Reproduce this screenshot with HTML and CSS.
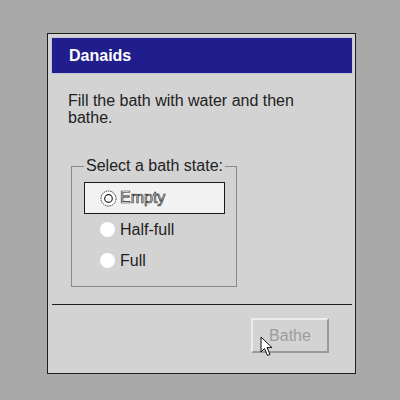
FILE: index.html
```html
<!DOCTYPE html>
<html>
<head>
<meta charset="utf-8">
<link rel="stylesheet" href="styles.css">
</head>
<body>
<div class="dialog">
  <div class="titlebar">Danaids</div>
  <p class="message">Fill the bath with water and then bathe.</p>
  <fieldset class="group">
    <legend class="legend">Select a bath state:</legend>
    <div class="row selected">
      <svg class="radio" width="17" height="17" viewBox="0 0 17 17">
        <circle cx="8.5" cy="8.5" r="7.5" fill="#fff" stroke="#333" stroke-width="1" stroke-dasharray="1.5 0.8"/>
        <circle cx="8.5" cy="8.5" r="3.8" fill="#fff" stroke="#222" stroke-width="1.2"/>
      </svg>
      <span class="label label-focus">Empty</span>
    </div>
    <div class="row">
      <span class="dot"></span>
      <span class="label">Half-full</span>
    </div>
    <div class="row">
      <span class="dot"></span>
      <span class="label">Full</span>
    </div>
  </fieldset>
  <div class="separator"></div>
  <div class="actions">
    <div class="button">Bathe</div>
  </div>
  <svg class="cursor" width="16" height="22" viewBox="0 0 16 22">
    <path d="M1 1 L1 16 L4.5 12.5 L7.5 19.5 L10 18.4 L7 11.6 L12 11.6 Z" fill="#fff" stroke="#111" stroke-width="1" stroke-linejoin="miter"/>
  </svg>
</div>
</body>
</html>
```
FILE: styles.css
```css
html, body {
  margin: 0;
  padding: 0;
}
body {
  width: 400px;
  height: 400px;
  background: #a9a9a9;
  font-family: "Liberation Sans", Arial, sans-serif;
  overflow: hidden;
  padding-top: 33px;
  box-sizing: border-box;
}
.dialog {
  position: relative;
  margin-left: 47px;
  width: 309px;
  height: 341px;
  box-sizing: border-box;
  border: 1px solid #1e1e1e;
  background: #d3d3d3;
  padding: 4px 3px 4px 4px;
}
.titlebar {
  height: 35px;
  background: #201e8c;
  box-shadow: 0 0 0 1px #c4c4dc;
  color: #fff;
  font-weight: bold;
  font-size: 16px;
  display: flex;
  align-items: center;
  padding-left: 17px;
}
.message {
  margin: 19px 0 0 16px;
  width: 260px;
  font-size: 16px;
  line-height: 17px;
  color: #222;
}
.group {
  margin: 31px 0 0 19px;
  padding: 7px 11px 10px 12px;
  border: 1px solid #8a8a8a;
  width: 141px;
  min-width: 0;
}
.legend {
  padding: 0 2px;
  font-size: 16px;
  line-height: 18px;
  color: #222;
}
.row {
  height: 31px;
  box-sizing: border-box;
  display: flex;
  align-items: center;
  padding-left: 16px;
  gap: 5px;
  font-size: 16px;
  color: #222;
}
.row.selected {
  height: 32px;
  background: #f2f2f2;
  border: 1px solid #1a1a1a;
  padding-left: 15px;
  gap: 3px;
}
.radio {
  display: block;
  flex: none;
}
.dot {
  width: 15px;
  height: 15px;
  border-radius: 50%;
  background: #fff;
  flex: none;
}
.label-focus {
  color: #f4f4f4;
  -webkit-text-stroke: 0.7px #2a2a2a;
}
.separator {
  margin-top: 17px;
  height: 1px;
  background: #1e1e1e;
}
.actions {
  display: flex;
  justify-content: flex-end;
  padding-right: 23px;
  margin-top: 13px;
}
.button {
  width: 78px;
  height: 35px;
  box-sizing: border-box;
  border-top: 2px solid #ececec;
  border-left: 2px solid #ececec;
  border-right: 2px solid #9a9a9a;
  border-bottom: 2px solid #9a9a9a;
  display: flex;
  align-items: center;
  justify-content: center;
  font-size: 16px;
  color: #9c9c9c;
}
.cursor {
  position: absolute;
  left: 212px;
  top: 302px;
}
```
